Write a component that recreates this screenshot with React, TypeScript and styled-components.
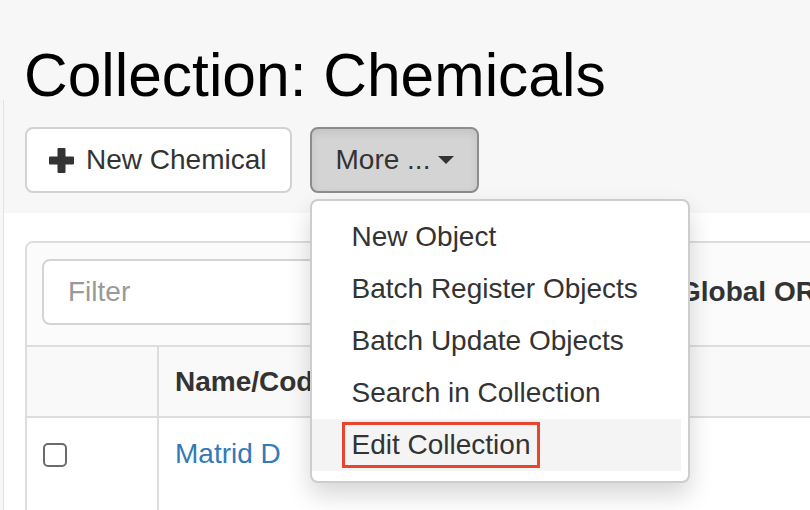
import React from "react";
import styled, { createGlobalStyle } from "styled-components";

const Global = createGlobalStyle`
  html, body {
    margin: 0;
    padding: 0;
    background: #f7f7f7;
    font-family: "Liberation Sans", Arial, Helvetica, sans-serif;
    color: #333;
    overflow: hidden;
  }
  #root { width: 810px; height: 510px; overflow: hidden; }
`;

const Page = styled.div`
  width: 810px;
  height: 510px;
  overflow: hidden;
  background: #f7f7f7;
`;

const Title = styled.h1`
  margin: 0;
  height: 55px;
  padding: 45px 0 0 24px;
  font-size: 60.5px;
  line-height: 60px;
  font-weight: 400;
  color: #000;
  white-space: nowrap;
`;

const Main = styled.div`
  margin-left: 3px;
  border-left: 1px solid #e2e2e2;
  height: 410px;
  display: flex;
  flex-direction: column;
`;

const Toolbar = styled.div`
  height: 113px;
  box-sizing: border-box;
  padding: 27px 0 0 21px;
  display: flex;
  align-items: flex-start;
  gap: 18px;
  background: #f7f7f7;
  position: relative;
  z-index: 2;
`;

const Button = styled.button<{ $active?: boolean }>`
  height: 66px;
  box-sizing: border-box;
  display: inline-flex;
  align-items: center;
  gap: 12px;
  padding: 0 23px 0 22px;
  border-radius: 8px;
  font-family: inherit;
  font-size: 28px;
  line-height: 40px;
  color: #333;
  cursor: pointer;
  background: ${(p) => (p.$active ? "#d4d4d4" : "#fff")};
  border: 2px solid ${(p) => (p.$active ? "#8c8c8c" : "#d2d2d2")};
  box-shadow: ${(p) => (p.$active ? "inset 0 4px 8px rgba(0,0,0,0.08)" : "none")};
`;

const MoreLabel = styled.span`
  padding-left: 2px;
`;

const Caret = styled.span`
  display: inline-block;
  width: 0;
  height: 0;
  border-top: 8px solid #333;
  border-left: 8px solid transparent;
  border-right: 8px solid transparent;
  margin-left: -4px;
`;

const DropWrap = styled.div`
  position: relative;
`;

const Menu = styled.ul`
  position: absolute;
  top: 72px;
  left: 0;
  width: 380px;
  box-sizing: border-box;
  margin: 0;
  padding: 10px 0;
  list-style: none;
  background: #fff;
  border: 2px solid #cdcdcd;
  border-radius: 8px;
  box-shadow: 0 12px 24px rgba(0, 0, 0, 0.16);
`;

const MenuItem = styled.li<{ $hover?: boolean }>`
  height: 52px;
  box-sizing: border-box;
  padding: 6px 0 6px 40px;
  margin-right: 7px;
  font-size: 28px;
  line-height: 40px;
  color: #333;
  white-space: nowrap;
  background: ${(p) => (p.$hover ? "#f4f4f4" : "transparent")};
`;

const Highlight = styled.span`
  display: inline-block;
  vertical-align: top;
  margin: -3px 0 0 -10px;
  padding: 0 7px;
  border: 3px solid #e8452c;
  line-height: 40px;
`;

const Body = styled.div`
  flex: 1;
  background: #fff;
  padding: 28px 0 0 21px;
  overflow: hidden;
  position: relative;
  z-index: 1;
`;

const Panel = styled.div`
  width: 1000px;
  border: 2px solid #dddddd;
  border-radius: 8px;
  background: #fff;
`;

const PanelHeading = styled.div`
  height: 104px;
  box-sizing: border-box;
  padding: 16px 15px 0 15px;
  background: #fbfbfb;
  border-bottom: 2px solid #dddddd;
  border-radius: 6px 6px 0 0;
  display: flex;
  align-items: flex-start;
  gap: 21px;
`;

const FilterInput = styled.input`
  width: 616px;
  height: 66px;
  box-sizing: border-box;
  padding: 0 24px;
  border: 2px solid #d4d4d4;
  border-radius: 8px;
  background: #fff;
  font-family: inherit;
  font-size: 28px;
  color: #333;
  outline: none;
  &::placeholder { color: #999; }
`;

const HeadingLabel = styled.span`
  font-size: 28px;
  line-height: 66px;
  font-weight: 700;
  color: #333;
  white-space: nowrap;
`;

const Table = styled.table`
  border-collapse: collapse;
  width: 100%;
`;

const Th = styled.th<{ $w?: number }>`
  width: ${(p) => (p.$w ? `${p.$w}px` : "auto")};
  height: 70px;
  box-sizing: border-box;
  padding: 0 16px;
  text-align: left;
  font-size: 28px;
  line-height: 40px;
  font-weight: 700;
  color: #333;
  background: #f9f9f9;
  border-bottom: 2px solid #dddddd;
  border-right: 2px solid #dddddd;
  white-space: nowrap;
`;

const Td = styled.td`
  height: 110px;
  box-sizing: border-box;
  padding: 16px 16px;
  vertical-align: top;
  font-size: 28px;
  line-height: 40px;
  border-right: 2px solid #dddddd;
`;

const CheckBox = styled.span`
  display: block;
  width: 24px;
  height: 24px;
  box-sizing: border-box;
  margin-top: 9px;
  border: 2px solid #6b6b6b;
  border-radius: 5px;
  background: #fff;
`;

const Link = styled.a`
  color: #337ab7;
  text-decoration: none;
`;

const PlusIcon = () => (
  <svg width="25" height="25" viewBox="0 0 25 25" aria-hidden="true">
    <rect x="8.5" y="0" width="8" height="25" rx="1" fill="#333" />
    <rect x="0" y="8.5" width="25" height="8" rx="1" fill="#333" />
  </svg>
);

const menuItems = [
  "New Object",
  "Batch Register Objects",
  "Batch Update Objects",
  "Search in Collection",
];

export default function App() {
  return (
    <Page>
      <Global />
      <Title>Collection: Chemicals</Title>
      <Main>
        <Toolbar>
          <Button>
            <PlusIcon />
            New Chemical
          </Button>
          <DropWrap>
            <Button $active>
              <MoreLabel>More ...</MoreLabel>
              <Caret />
            </Button>
            <Menu>
              {menuItems.map((m) => (
                <MenuItem key={m}>{m}</MenuItem>
              ))}
              <MenuItem $hover>
                <Highlight>Edit Collection</Highlight>
              </MenuItem>
            </Menu>
          </DropWrap>
        </Toolbar>
        <Body>
          <Panel>
            <PanelHeading>
              <FilterInput placeholder="Filter" />
              <HeadingLabel>Global ORF search</HeadingLabel>
            </PanelHeading>
            <Table>
              <thead>
                <tr>
                  <Th $w={131} />
                  <Th>Name/Code</Th>
                </tr>
              </thead>
              <tbody>
                <tr>
                  <Td>
                    <CheckBox />
                  </Td>
                  <Td>
                    <Link href="#">Matrid D</Link>
                  </Td>
                </tr>
              </tbody>
            </Table>
          </Panel>
        </Body>
      </Main>
    </Page>
  );
}
